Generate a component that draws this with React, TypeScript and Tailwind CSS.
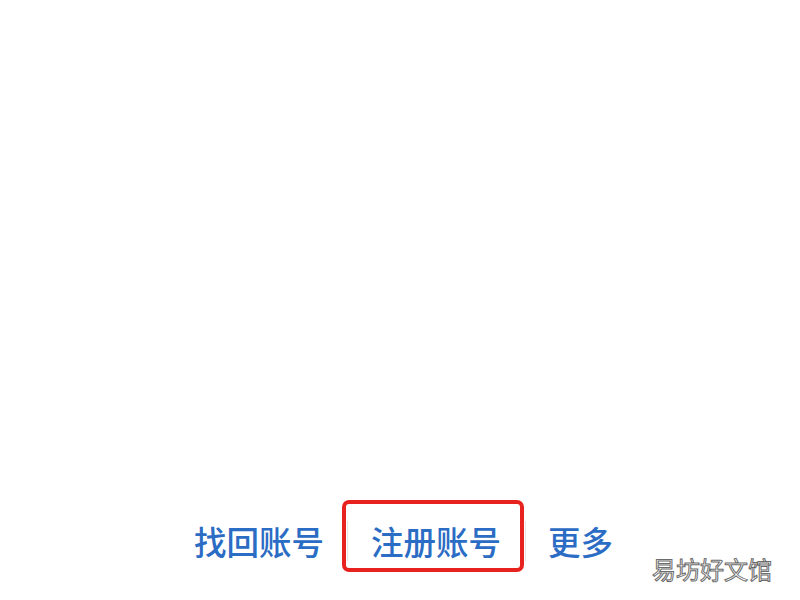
export default function App() {
  return (
    <div className="relative flex h-[600px] w-[800px] flex-col justify-end overflow-hidden bg-white font-['Noto_Sans_CJK_SC','Noto_Sans',sans-serif]">
      {/* Bottom links */}
      <div className="flex items-center pb-[39px] pl-[194px] text-[32.5px] leading-[32px] font-medium text-[#2b6cc4]">
        <span>找回账号</span>
        <span className="mx-[23px] h-[40px] w-px bg-[#e6e6e6]" />
        <span className="relative">
          注册账号
          <span className="pointer-events-none absolute -top-[25px] -bottom-[15px] -left-[29px] -right-[23px] rounded-[7px] border-[4px] border-[#e8231f]" />
        </span>
        <span className="ml-[24px] mr-[22px] h-[40px] w-px bg-[#e6e6e6]" />
        <span>更多</span>
      </div>

      {/* Watermark */}
      <div className="absolute right-[28px] bottom-[19px] text-[24px] leading-[24px] text-white [-webkit-text-stroke:1px_#6b6b6b]">
        易坊好文馆
      </div>
    </div>
  );
}
